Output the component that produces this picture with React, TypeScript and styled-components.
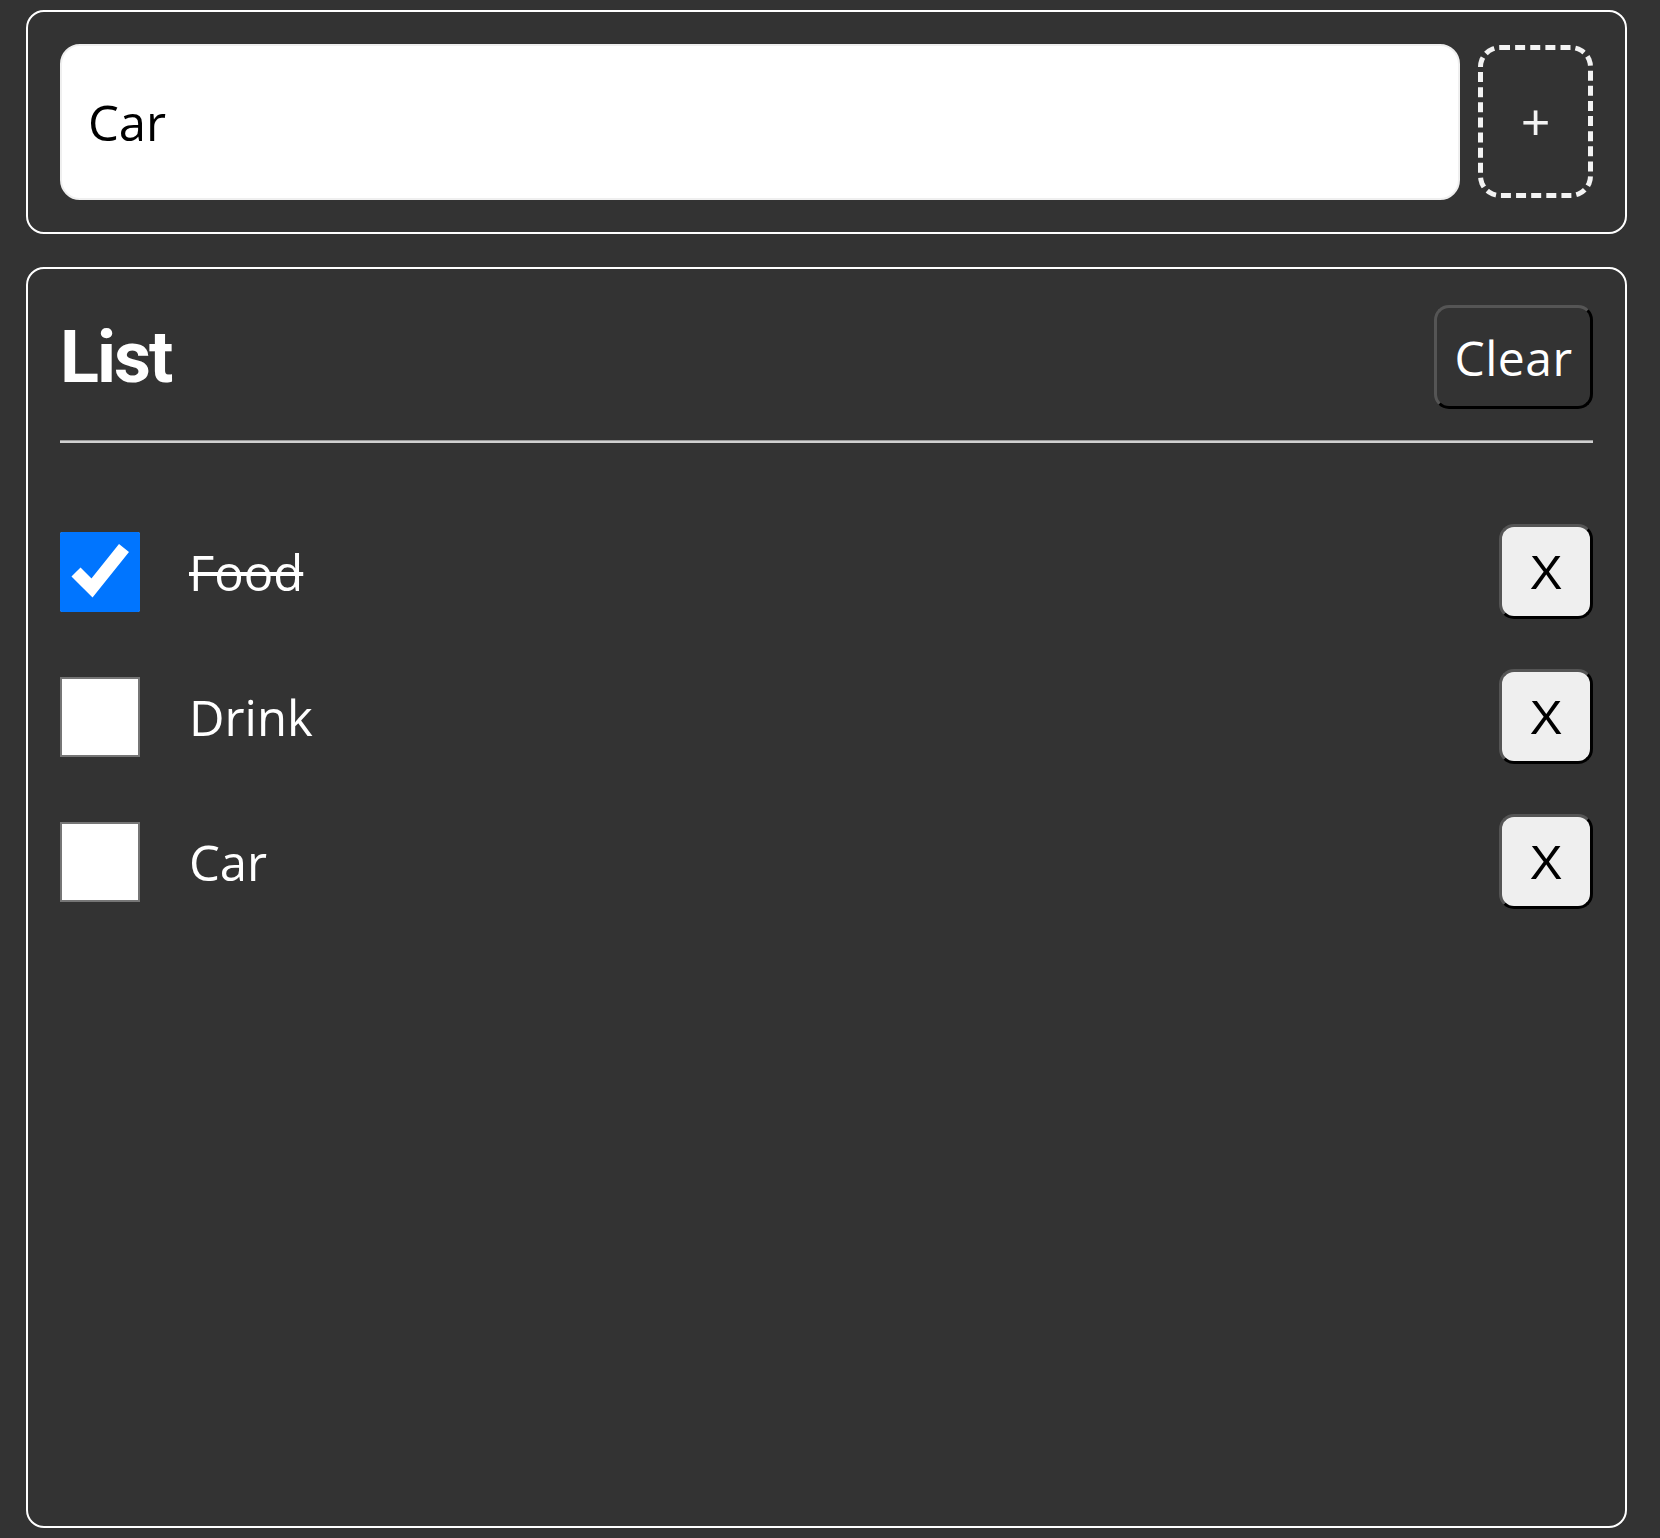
import React, { useState } from "react";
import styled, { createGlobalStyle } from "styled-components";

const GlobalStyle = createGlobalStyle`
  html, body { margin: 0; padding: 0; background: #333333; }
  * { box-sizing: border-box; }
`;

const Page = styled.div`
  min-height: 100vh;
  padding: 10px 33px 10px 26px;
  display: flex;
  flex-direction: column;
  gap: 33px;
  font-family: "Open Sans", "Liberation Sans", sans-serif;
`;

const Card = styled.section<{ $grow?: boolean }>`
  border: 2px solid #ffffff;
  border-radius: 18px;
  padding: 32px;
  ${(p) => (p.$grow ? "flex: 1;" : "")}
`;

const InputRow = styled.form`
  display: flex;
  align-items: stretch;
  gap: 18px;
`;

const TextInput = styled.input`
  flex: 1;
  height: 156px;
  border: 2px solid #efefef;
  border-radius: 20px;
  background: #ffffff;
  padding: 0 26px;
  font-family: "Open Sans", sans-serif;
  font-size: 49px;
  color: #000;
  outline: none;
`;

const AddButton = styled.button`
  width: 115px;
  height: 153px;
  margin-top: 1px;
  border: 5px dashed #f3f3f3;
  border-radius: 22px;
  background: transparent;
  color: #f3f3f3;
  font-family: "Liberation Sans", Arial, sans-serif;
  font-size: 50px;
  line-height: 1;
  padding: 0;
  cursor: pointer;
`;

const Header = styled.div`
  display: flex;
  align-items: center;
  justify-content: space-between;
  height: 112px;
  margin-bottom: 27px;
`;

const Title = styled.h1`
  margin: 0;
  font-family: Roboto, "Liberation Sans", sans-serif;
  font-weight: 700;
  font-size: 72px;
  letter-spacing: -2px;
  color: #ffffff;
`;

const ClearButton = styled.button`
  width: 159px;
  height: 104px;
  border: 3px solid;
  border-color: #555555 #000000 #000000 #555555;
  border-radius: 15px;
  background: transparent;
  color: #ffffff;
  font-family: "Open Sans", sans-serif;
  font-size: 48px;
  letter-spacing: 0.5px;
  padding: 0;
  cursor: pointer;
`;

const Divider = styled.hr`
  margin: 0;
  border: none;
  border-top: 1px solid #9a9a9a;
  border-bottom: 2px solid #d0d0d0;
`;

const Items = styled.ul`
  list-style: none;
  margin: 81px 0 0;
  padding: 0;
  display: flex;
  flex-direction: column;
  gap: 50px;
`;

const Item = styled.li`
  display: flex;
  align-items: center;
  height: 95px;
`;

const Check = styled.input`
  width: 80px;
  height: 80px;
  margin: 0;
  flex: none;
  accent-color: #0075ff;
  border-radius: 4px;
  &:not(:checked) {
    outline: 2px solid #767676;
    outline-offset: -2px;
  }
`;

const Label = styled.span<{ $done: boolean }>`
  margin-left: 49px;
  flex: 1;
  color: #ffffff;
  font-family: "Open Sans", sans-serif;
  font-size: 49px;
  text-decoration: ${(p) => (p.$done ? "line-through" : "none")};
  text-decoration-thickness: 4px;
`;

const RemoveButton = styled.button`
  width: 94px;
  height: 95px;
  border: 3px solid;
  border-color: #555555 #000000 #000000 #555555;
  border-radius: 15px;
  background: #efefef;
  color: #000000;
  font-family: "Liberation Sans", Arial, sans-serif;
  font-size: 49px;
  padding: 0;
  cursor: pointer;
`;

type Todo = { id: number; text: string; done: boolean };

export default function App() {
  const [value, setValue] = useState("Car");
  const [todos, setTodos] = useState<Todo[]>([
    { id: 1, text: "Food", done: true },
    { id: 2, text: "Drink", done: false },
    { id: 3, text: "Car", done: false },
  ]);

  const add = (e: React.FormEvent) => {
    e.preventDefault();
    if (!value.trim()) return;
    setTodos((t) => [...t, { id: Date.now(), text: value, done: false }]);
  };

  return (
    <>
      <GlobalStyle />
      <Page>
        <Card>
          <InputRow onSubmit={add}>
            <TextInput value={value} onChange={(e) => setValue(e.target.value)} />
            <AddButton type="submit">+</AddButton>
          </InputRow>
        </Card>
        <Card $grow>
          <Header>
            <Title>List</Title>
            <ClearButton onClick={() => setTodos([])}>Clear</ClearButton>
          </Header>
          <Divider />
          <Items>
            {todos.map((t) => (
              <Item key={t.id}>
                <Check
                  type="checkbox"
                  checked={t.done}
                  onChange={() =>
                    setTodos((all) =>
                      all.map((x) => (x.id === t.id ? { ...x, done: !x.done } : x))
                    )
                  }
                />
                <Label $done={t.done}>{t.text}</Label>
                <RemoveButton onClick={() => setTodos((all) => all.filter((x) => x.id !== t.id))}>
                  X
                </RemoveButton>
              </Item>
            ))}
          </Items>
        </Card>
      </Page>
    </>
  );
}
